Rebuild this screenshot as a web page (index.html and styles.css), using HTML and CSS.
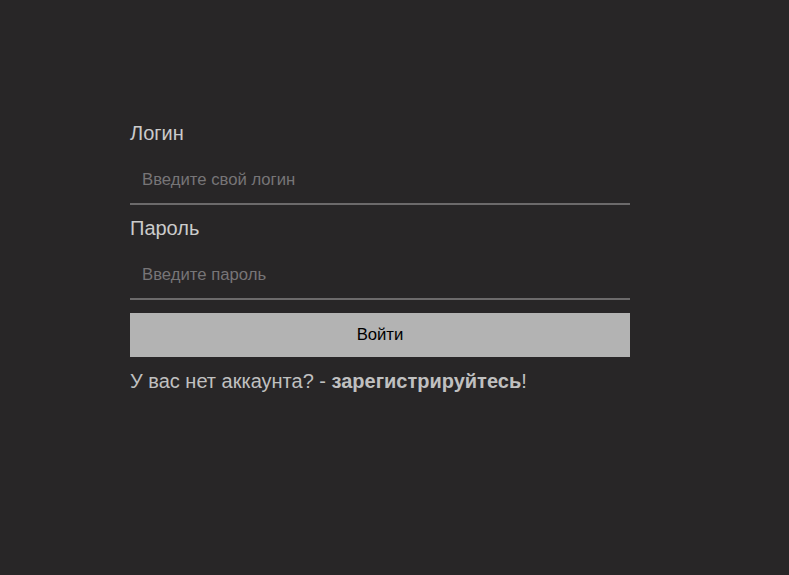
FILE: index.html
```html
<!DOCTYPE html>
<html lang="ru">
<head>
<meta charset="utf-8">
<title>Вход</title>
<link rel="stylesheet" href="styles.css">
</head>
<body>
<main class="page">
  <form class="login-form">
    <label class="field-label" for="login">Логин</label>
    <input class="field-input" id="login" type="text" placeholder="Введите свой логин">
    <label class="field-label" for="password">Пароль</label>
    <input class="field-input field-input-last" id="password" type="password" placeholder="Введите пароль">
    <button class="submit-btn" type="button">Войти</button>
    <p class="register-note">У вас нет аккаунта? - <a class="register-link" href="#">зарегистрируйтесь</a>!</p>
  </form>
</main>
</body>
</html>
```

FILE: styles.css
```css
html, body {
  margin: 0;
  padding: 0;
  background: #282627;
  height: 100%;
}
body {
  font-family: "Liberation Sans", Arial, sans-serif;
  color: #c9c9c9;
}
.page {
  padding: 122px 0 0 130px;
}
.login-form {
  width: 500px;
  display: flex;
  flex-direction: column;
}
.field-label {
  font-size: 20px;
  line-height: 22px;
  color: #cbcbcb;
  margin-bottom: 12px;
}
.field-input {
  box-sizing: border-box;
  height: 49px;
  margin: 0 0 12px 0;
  padding: 0 12px;
  background: transparent;
  border: none;
  border-bottom: 2px solid #6c6a6b;
  outline: none;
  font-family: "Liberation Sans", Arial, sans-serif;
  font-size: 16.7px;
  color: #cbcbcb;
}
.field-input::placeholder {
  color: #777577;
}
.field-input-last {
  margin-bottom: 13px;
}
.submit-btn {
  height: 44px;
  margin: 0;
  border: none;
  background: #b3b3b3;
  color: #000;
  font-family: "Liberation Sans", Arial, sans-serif;
  font-size: 16.7px;
  cursor: pointer;
}
.register-note {
  margin: 13px 0 0 0;
  font-size: 20px;
  line-height: 22px;
  color: #c0c0c0;
}
.register-link {
  color: #c0c0c0;
  font-weight: bold;
  text-decoration: none;
}
```
